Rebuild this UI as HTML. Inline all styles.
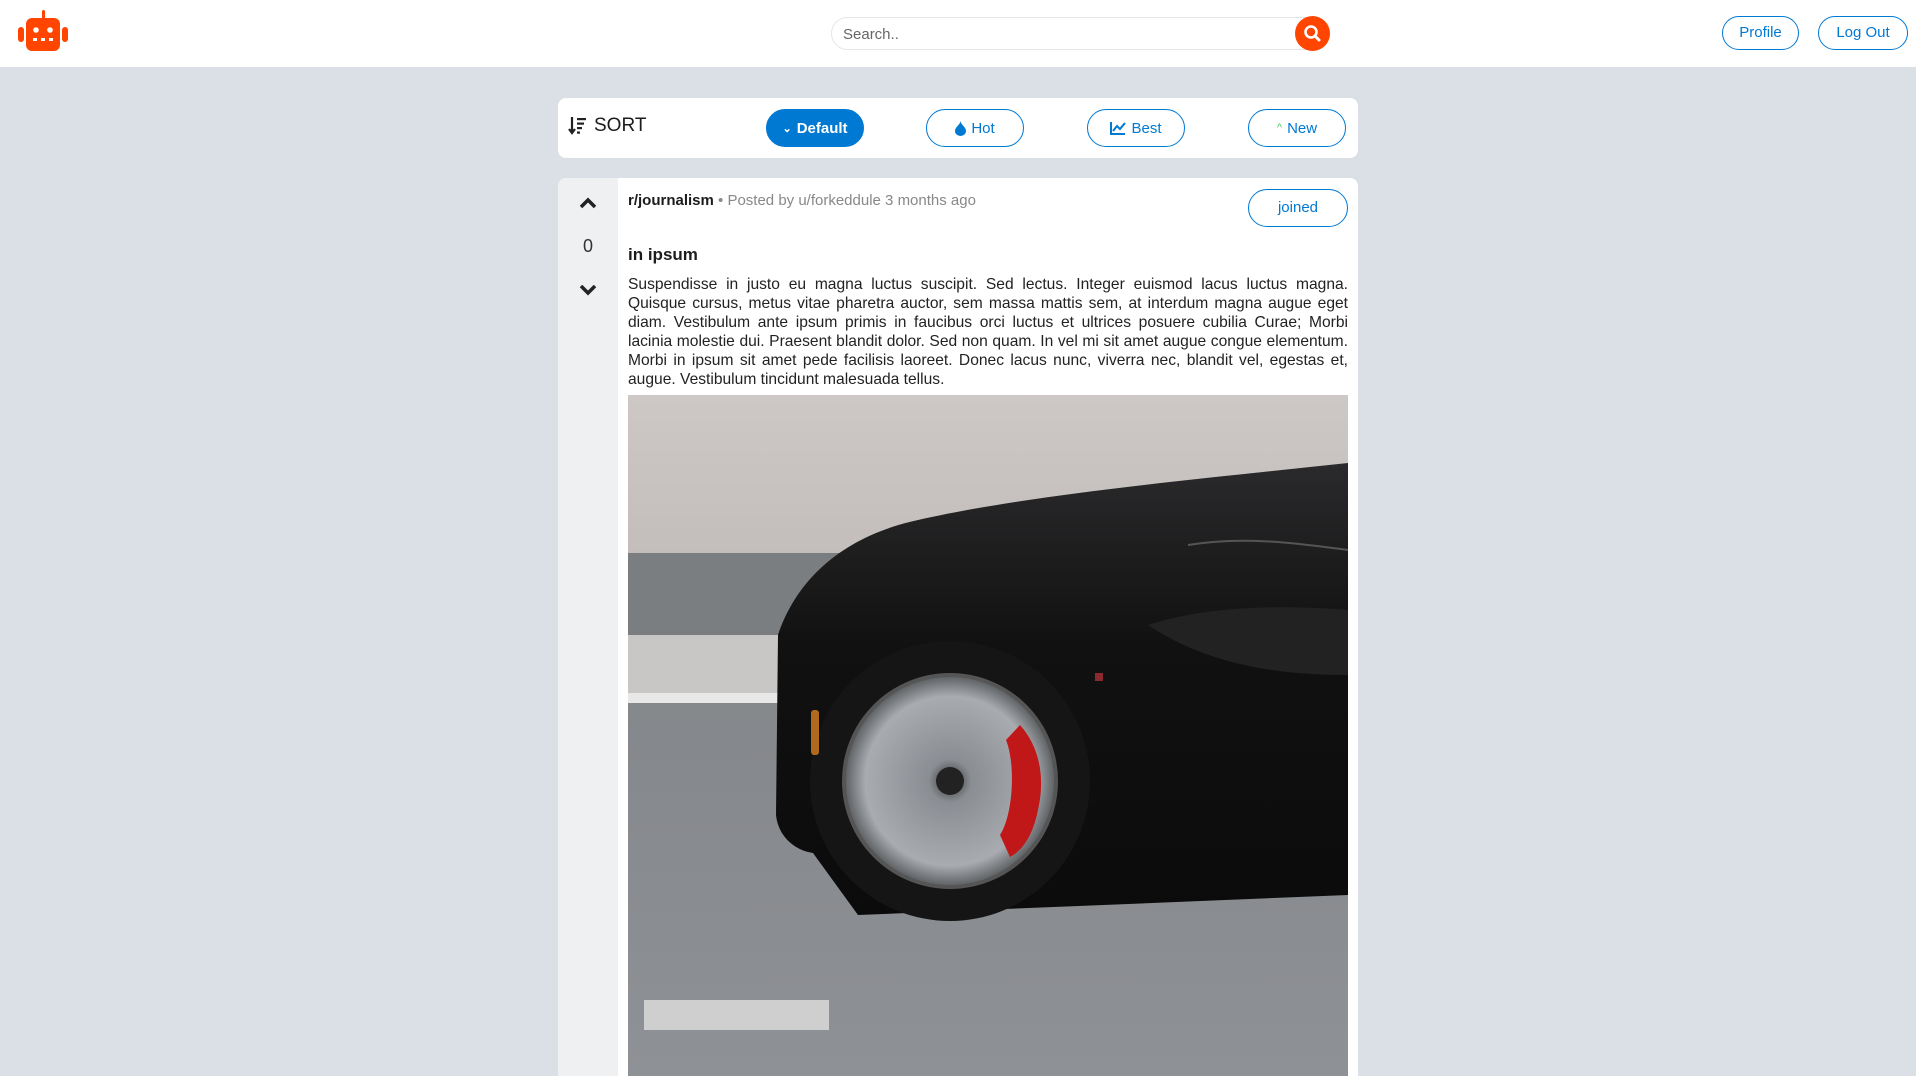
<!DOCTYPE html>
<html><head><meta charset="utf-8"><style>
*{box-sizing:border-box;margin:0;padding:0}
html,body{width:1916px;height:1076px;overflow:hidden}
body{background:#dae0e6;font-family:"Liberation Sans",sans-serif;color:#1c1c1c;position:relative}
.hdr{position:absolute;left:0;top:0;width:1916px;height:67px;background:#fff}
.search{position:absolute;left:831px;top:17px;width:499px;height:33px;border:1px solid #e6e6e6;border-radius:17px;background:#fff;font-size:15px;color:#666;padding:8px 11px}
.sbtn{position:absolute;left:1295px;top:16px;width:35px;height:35px;border-radius:50%;background:#ff4500}
.ob{position:absolute;border:1px solid #0079d3;border-radius:18px;color:#0079d3;font-size:15px;text-align:center;background:#fff}
.card{position:absolute;background:#fff;border-radius:8px}
.sb{position:absolute;top:109px;width:98px;height:38px;border-radius:19px;border:1px solid #0079d3;color:#0079d3;font-size:15px;display:flex;align-items:center;justify-content:center;gap:5px;background:#fff}
.txt{position:absolute;left:628px;top:275px;width:720px;font-size:15.6px;line-height:19px;text-align:justify;color:#222}
</style></head><body>
<div class="hdr">
<svg style="position:absolute;left:17px;top:10px" width="52" height="42" viewBox="0 0 52 42"><rect x="25" y="0" width="3" height="9" rx="1.5" fill="#ff4500"/><rect x="9" y="8" width="34" height="33" rx="6" fill="#ff4500"/><rect x="1" y="17" width="6" height="15" rx="3" fill="#ff4500"/><rect x="45" y="17" width="6" height="15" rx="3" fill="#ff4500"/><circle cx="19" cy="20" r="2.8" fill="#fff"/><circle cx="33" cy="20" r="2.8" fill="#fff"/><rect x="16" y="28" width="4" height="3" fill="#fff"/><rect x="24" y="28" width="4" height="3" fill="#fff"/><rect x="32" y="28" width="4" height="3" fill="#fff"/></svg>
<div class="search">Search..</div>
<div class="sbtn"><svg width="35" height="35" viewBox="0 0 35 35"><circle cx="16" cy="16" r="5.5" fill="none" stroke="#fff" stroke-width="2.6"/><line x1="20" y1="20" x2="24" y2="24" stroke="#fff" stroke-width="3" stroke-linecap="round"/></svg></div>
<div class="ob" style="left:1722px;top:16px;width:77px;height:34px;line-height:32px">Profile</div>
<div class="ob" style="left:1818px;top:16px;width:90px;height:34px;line-height:32px">Log Out</div>
</div>

<div class="card" style="left:558px;top:98px;width:800px;height:60px">
<svg style="position:absolute;left:10px;top:18px" width="20" height="20" viewBox="0 0 20 20"><path d="M4 1v16M1 13l3 4 3-4" stroke="#222" stroke-width="2.2" fill="none"/><rect x="9" y="2" width="9" height="2.2" fill="#222"/><rect x="9" y="6.5" width="7" height="2.2" fill="#222"/><rect x="9" y="11" width="5" height="2.2" fill="#222"/><rect x="9" y="15.5" width="3" height="2.2" fill="#222"/></svg>
<div style="position:absolute;left:36px;top:17px;font-size:19px;color:#1c1c1c">SORT</div>
</div>
<div class="sb" style="left:766px;background:#0079d3;color:#fff;font-weight:bold;border-color:#0079d3"><span style="font-size:11px">&#8964;</span>Default</div>
<div class="sb" style="left:926px"><svg width="11" height="15" viewBox="0 0 11 15"><path d="M5.5 0C6 4 11 6 11 10a5.5 5 0 0 1-11 0C0 6 5 4 5.5 0z" fill="#0079d3"/></svg>Hot</div>
<div class="sb" style="left:1087px"><svg width="16" height="14" viewBox="0 0 16 14"><path d="M1 1v12h14" stroke="#0079d3" stroke-width="2" fill="none"/><path d="M3 10l4-5 3 3 5-6" stroke="#0079d3" stroke-width="2" fill="none"/></svg>Best</div>
<div class="sb" style="left:1248px"><span style="color:#46d160;font-size:11px">^</span>New</div>

<div class="card" style="left:558px;top:178px;width:800px;height:898px;overflow:hidden;border-radius:8px 8px 0 0">
<div style="position:absolute;left:0;top:0;width:60px;height:898px;background:#eef0f1"></div>
<svg style="position:absolute;left:20px;top:18px" width="20" height="14" viewBox="0 0 20 14"><path d="M3 11l7-7 7 7" stroke="#222" stroke-width="3.5" fill="none"/></svg>
<div style="position:absolute;left:0;width:60px;top:58px;text-align:center;font-size:18px;color:#333">0</div>
<svg style="position:absolute;left:20px;top:105px" width="20" height="14" viewBox="0 0 20 14"><path d="M3 3l7 7 7-7" stroke="#222" stroke-width="3.5" fill="none"/></svg>
<div style="position:absolute;left:70px;top:14px;font-size:15px;white-space:nowrap"><b style="font-weight:bold;color:#1c1c1c">r/journalism</b> <span style="color:#888">• Posted by u/forkeddule 3 months ago</span></div>
<div class="ob" style="left:690px;top:11px;width:100px;height:38px;line-height:36px;border-radius:19px;color:#0079d3">joined</div>
<div style="position:absolute;left:70px;top:67px;font-size:17px;font-weight:bold;color:#1c1c1c">in ipsum</div>
</div>
<div class="txt">Suspendisse in justo eu magna luctus suscipit. Sed lectus. Integer euismod lacus luctus magna. Quisque cursus, metus vitae pharetra auctor, sem massa mattis sem, at interdum magna augue eget diam. Vestibulum ante ipsum primis in faucibus orci luctus et ultrices posuere cubilia Curae; Morbi lacinia molestie dui. Praesent blandit dolor. Sed non quam. In vel mi sit amet augue congue elementum. Morbi in ipsum sit amet pede facilisis laoreet. Donec lacus nunc, viverra nec, blandit vel, egestas et, augue. Vestibulum tincidunt malesuada tellus.</div>

<svg style="position:absolute;left:628px;top:395px" width="720" height="681" viewBox="0 0 720 681">
<defs>
<linearGradient id="bg" x1="0" y1="0" x2="0" y2="1"><stop offset="0" stop-color="#cdc8c6"/><stop offset="1" stop-color="#c3bdbb"/></linearGradient>
<linearGradient id="rd" x1="0" y1="0" x2="0" y2="1"><stop offset="0" stop-color="#767a7e"/><stop offset="0.5" stop-color="#85888c"/><stop offset="1" stop-color="#8e9195"/></linearGradient>
<radialGradient id="rim" cx="0.5" cy="0.5" r="0.5"><stop offset="0" stop-color="#333"/><stop offset="0.2" stop-color="#8a8e93"/><stop offset="0.8" stop-color="#a8acb0"/><stop offset="1" stop-color="#5a5d60"/></radialGradient>
<linearGradient id="body" x1="0" y1="0" x2="0" y2="1"><stop offset="0" stop-color="#2a2a2c"/><stop offset="0.4" stop-color="#111"/><stop offset="1" stop-color="#0b0b0c"/></linearGradient>
</defs>
<rect width="720" height="681" fill="url(#rd)"/>
<rect width="720" height="160" fill="url(#bg)"/>
<rect y="158" width="720" height="82" fill="#7b7e81"/>
<rect y="240" width="720" height="58" fill="#c9c6c6"/>
<rect y="298" width="720" height="10" fill="#e8e8e8"/>
<rect y="308" width="720" height="20" fill="#86898c"/>
<rect x="16" y="605" width="185" height="30" fill="#d6d6d6" opacity="0.9"/>
<path d="M720 68C560 85 400 100 290 125C220 140 170 180 150 240L148 420C150 440 165 455 185 458L230 520L720 500Z" fill="url(#body)"/>
<path d="M560 150C620 140 680 150 720 155" stroke="#555" stroke-width="2" fill="none"/>
<path d="M520 230C580 210 660 210 720 215L720 280C650 280 580 270 520 230Z" fill="#222"/>
<circle cx="322" cy="386" r="140" fill="#151515"/>
<circle cx="322" cy="386" r="106" fill="url(#rim)"/>
<circle cx="322" cy="386" r="106" fill="none" stroke="#555" stroke-width="4"/>
<path d="M392 330C410 350 418 380 410 415C405 440 395 455 382 462L372 440C385 420 388 370 378 345Z" fill="#c01818"/>
<circle cx="322" cy="386" r="14" fill="#222"/>
<rect x="183" y="315" width="8" height="45" rx="3" fill="#b06a20"/>
<rect x="467" y="278" width="8" height="8" fill="#8a2a30"/>
</svg>
</body></html>
